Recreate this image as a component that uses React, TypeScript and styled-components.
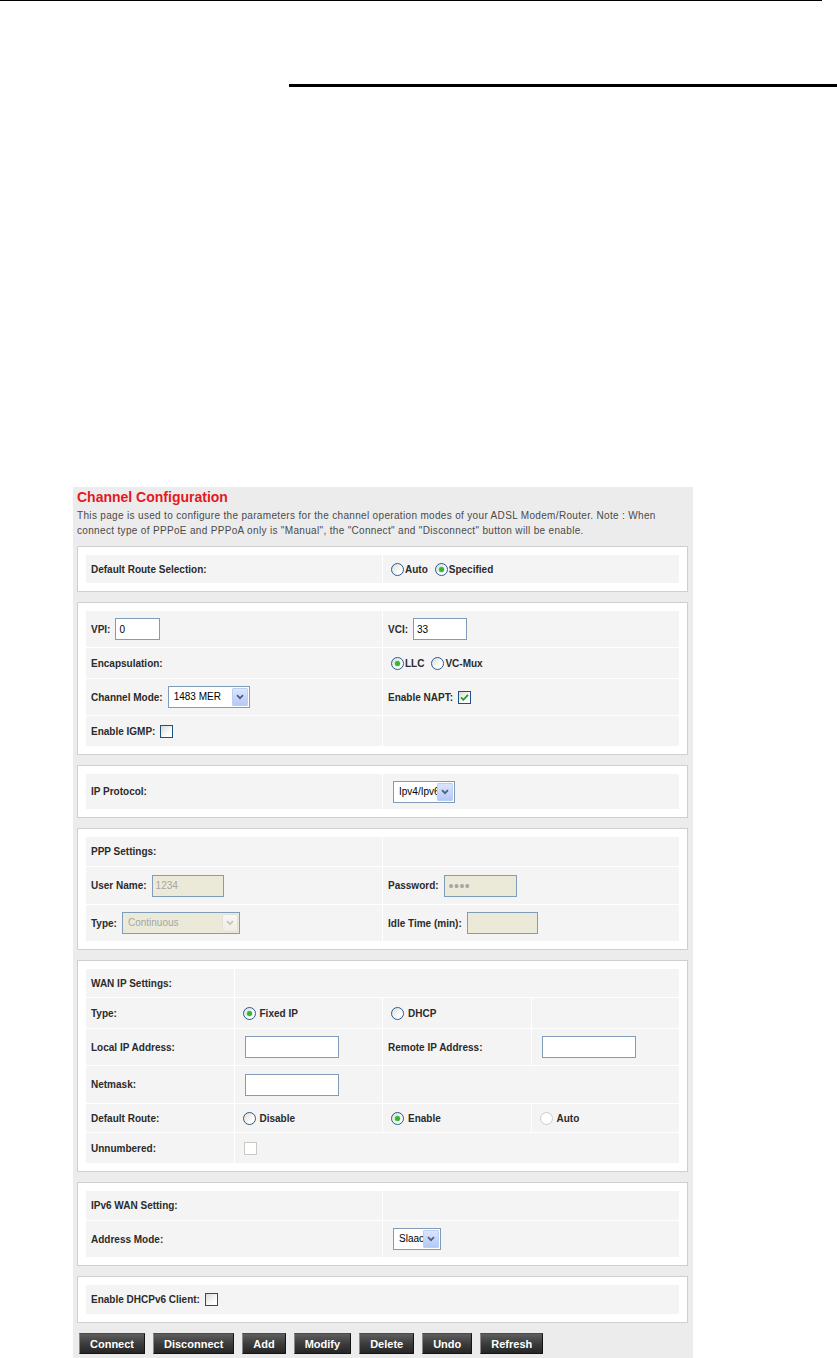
import React from "react";
import styled, { createGlobalStyle } from "styled-components";

const GlobalStyle = createGlobalStyle`
  html, body { margin: 0; padding: 0; background: #ffffff; overflow: hidden; }
  body { font-family: "Liberation Sans", Arial, sans-serif; }
  * { box-sizing: border-box; }
`;

const Page = styled.div`
  width: 837px;
  height: 1358px;
  overflow: hidden;
`;

const TopRule = styled.div`
  width: 822px;
  height: 1px;
  background: #000;
`;

const HeaderRule = styled.div`
  margin: 83px 0 0 289px;
  height: 3px;
  background: #000;
`;

const Panel = styled.div`
  margin: 400px 0 0 73px;
  width: 620px;
  background: #ececec;
  padding: 2px 5px 8px 4px;
`;

const Title = styled.h1`
  margin: 0;
  font-size: 14px;
  line-height: 17px;
  font-weight: bold;
  color: #e4181e;
`;

const Desc = styled.p`
  margin: 2px 0 8px;
  font-size: 10px;
  line-height: 15px;
  letter-spacing: 0.33px;
  color: #4a4a4a;
  white-space: nowrap;
`;

const Sections = styled.div`
  display: flex;
  flex-direction: column;
  gap: 10px;
`;

const Box = styled.section`
  background: #fff;
  border: 1px solid #cfcfcf;
  padding: 7px;
`;

const FormTable = styled.table`
  width: 100%;
  table-layout: fixed;
  border-collapse: separate;
  border-spacing: 1px;
`;

const Col = styled.col<{ $w: string }>`
  width: ${(p) => p.$w};
`;

const Row = styled.tr<{ $h?: number }>`
  & > td {
    height: ${(p) => p.$h ?? 29}px;
  }
`;

const Cell = styled.td`
  background: #f4f4f4;
  padding: 0 5px;
  font-size: 10px;
  line-height: 15px;
  font-weight: bold;
  color: #2b2b2b;
  vertical-align: middle;
  white-space: nowrap;
  overflow: hidden;
`;

const Field = styled.div`
  display: flex;
  align-items: center;
  gap: 5px;
`;

const Inset = styled.div<{ $pad: number }>`
  display: flex;
  align-items: center;
  padding-left: ${(p) => p.$pad}px;
`;

const Options = styled.div`
  display: flex;
  align-items: center;
  height: 15px;
`;

const Option = styled.span<{ $gap: number }>`
  display: flex;
  align-items: center;
  gap: ${(p) => p.$gap}px;
  margin-right: 4px;
`;

const RadioMark = styled.span<{ $checked?: boolean; $disabled?: boolean }>`
  display: flex;
  align-items: center;
  justify-content: center;
  flex: none;
  width: 13px;
  height: 13px;
  margin-left: 3px;
  border-radius: 50%;
  border: 1px solid ${(p) => (p.$disabled ? "#cdcdc6" : "#2c5a8a")};
  background: ${(p) =>
    p.$disabled ? "#ffffff" : "linear-gradient(135deg, #dedcd4 0%, #ffffff 70%)"};
  &::after {
    content: "";
    width: 5px;
    height: 5px;
    border-radius: 50%;
    background: #34b534;
    box-shadow: 0 0 1px 0.5px #a6e2a6;
    display: ${(p) => (p.$checked ? "block" : "none")};
  }
`;

const CheckMark = styled.span<{ $disabled?: boolean }>`
  display: flex;
  align-items: center;
  justify-content: center;
  flex: none;
  width: 13px;
  height: 13px;
  border: 1px solid ${(p) => (p.$disabled ? "#c9c9c2" : "#1c5180")};
  background: ${(p) =>
    p.$disabled ? "#ffffff" : "linear-gradient(135deg, #dcdcd5 0%, #ffffff 75%)"};
`;

const TextInput = styled.input<{ $w: number }>`
  width: ${(p) => p.$w}px;
  height: 22px;
  margin: 0;
  border: 1px solid #7f9db9;
  padding: 0 3px;
  font: 10px "Liberation Sans", Arial, sans-serif;
  color: #000;
  background: #fff;
  outline: none;
  &:disabled {
    background: #ebe9d8;
    color: #a6a6a6;
    -webkit-text-fill-color: #a6a6a6;
  }
`;

const PasswordInput = styled(TextInput)`
  font-size: 14px;
  letter-spacing: 0.5px;
  padding-left: 4px;
`;

const SelectBox = styled.div<{ $w: number; $disabled?: boolean }>`
  display: flex;
  align-items: stretch;
  width: ${(p) => p.$w}px;
  height: 22px;
  padding: 1px;
  border: 1px solid #7f9db9;
  background: ${(p) => (p.$disabled ? "#ebe9d8" : "#ffffff")};
  font-weight: normal;
`;

const SelectValue = styled.span<{ $disabled?: boolean }>`
  flex: 1;
  min-width: 0;
  overflow: hidden;
  white-space: nowrap;
  padding-left: 4px;
  font-size: 10px;
  line-height: 18px;
  color: ${(p) => (p.$disabled ? "#a6a6a6" : "#000")};
`;

const SelectButton = styled.span<{ $disabled?: boolean }>`
  flex: none;
  width: 16px;
  display: flex;
  align-items: center;
  justify-content: center;
  border: 1px solid ${(p) => (p.$disabled ? "#e2e1da" : "#bdcdf6")};
  border-radius: 1px;
  background: ${(p) =>
    p.$disabled
      ? "linear-gradient(#f7f6f2, #eeede7)"
      : "linear-gradient(#dbe5fd, #b5c9f6)"};
`;

const ActionBar = styled.div`
  display: flex;
  gap: 8px;
  margin-top: 10px;
  padding-left: 2px;
`;

const ActionButton = styled.button`
  height: 21px;
  padding: 0 10px;
  margin: 0;
  font: bold 11px "Liberation Sans", Arial, sans-serif;
  color: #fff;
  background: linear-gradient(#5e5e5e 0%, #3a3a3a 55%, #262626 100%);
  border: 1px solid #141414;
  border-left-color: #8a8a8a;
  border-top-color: #4a4a4a;
  cursor: pointer;
`;

type RadioProps = { checked?: boolean; disabled?: boolean; label: string; gap?: number };

const Radio = ({ checked, disabled, label, gap = 1 }: RadioProps) => (
  <Option $gap={gap}>
    <RadioMark $checked={checked} $disabled={disabled} />
    <span>{label}</span>
  </Option>
);

const Checkbox = ({ checked, disabled }: { checked?: boolean; disabled?: boolean }) => (
  <CheckMark $disabled={disabled}>
    {checked && (
      <svg width="9" height="9" viewBox="0 0 9 9">
        <path d="M1 4.4 L3.4 6.8 L8 1.8" fill="none" stroke="#21a121" strokeWidth="1.8" />
      </svg>
    )}
  </CheckMark>
);

const Select = ({ value, width, disabled }: { value: string; width: number; disabled?: boolean }) => (
  <SelectBox $w={width} $disabled={disabled}>
    <SelectValue $disabled={disabled}>{value}</SelectValue>
    <SelectButton $disabled={disabled}>
      <svg width="8" height="6" viewBox="0 0 8 6">
        <path
          d="M1 1.2 L4 4.2 L7 1.2"
          fill="none"
          stroke={disabled ? "#c8c6b8" : "#4d6185"}
          strokeWidth="1.8"
        />
      </svg>
    </SelectButton>
  </SelectBox>
);

const TwoCols = () => (
  <colgroup>
    <Col $w="50%" />
    <Col $w="50%" />
  </colgroup>
);

export default function App() {
  return (
    <Page>
      <GlobalStyle />
      <TopRule />
      <HeaderRule />
      <Panel>
        <Title>Channel Configuration</Title>
        <Desc>
          This page is used to configure the parameters for the channel operation modes of your ADSL Modem/Router. Note : When
          <br />
          connect type of PPPoE and PPPoA only is "Manual", the "Connect" and "Disconnect" button will be enable.
        </Desc>
        <Sections>
          <Box>
            <FormTable>
              <TwoCols />
              <tbody>
                <Row $h={28}>
                  <Cell>Default Route Selection:</Cell>
                  <Cell>
                    <Options>
                      <Radio label="Auto" />
                      <Radio label="Specified" checked />
                    </Options>
                  </Cell>
                </Row>
              </tbody>
            </FormTable>
          </Box>

          <Box>
            <FormTable>
              <TwoCols />
              <tbody>
                <Row $h={36}>
                  <Cell>
                    <Field>
                      VPI: <TextInput $w={45} defaultValue="0" />
                    </Field>
                  </Cell>
                  <Cell>
                    <Field>
                      VCI: <TextInput $w={54} defaultValue="33" />
                    </Field>
                  </Cell>
                </Row>
                <Row $h={30}>
                  <Cell>Encapsulation:</Cell>
                  <Cell>
                    <Options>
                      <Radio label="LLC" checked />
                      <Radio label="VC-Mux" />
                    </Options>
                  </Cell>
                </Row>
                <Row $h={36}>
                  <Cell>
                    <Field>
                      Channel Mode: <Select value="1483 MER" width={82} />
                    </Field>
                  </Cell>
                  <Cell>
                    <Field>
                      Enable NAPT: <Checkbox checked />
                    </Field>
                  </Cell>
                </Row>
                <Row $h={30}>
                  <Cell>
                    <Field>
                      Enable IGMP: <Checkbox />
                    </Field>
                  </Cell>
                  <Cell />
                </Row>
              </tbody>
            </FormTable>
          </Box>

          <Box>
            <FormTable>
              <TwoCols />
              <tbody>
                <Row $h={35}>
                  <Cell>IP Protocol:</Cell>
                  <Cell>
                    <Inset $pad={5}>
                      <Select value="Ipv4/Ipv6" width={62} />
                    </Inset>
                  </Cell>
                </Row>
              </tbody>
            </FormTable>
          </Box>

          <Box>
            <FormTable>
              <TwoCols />
              <tbody>
                <Row>
                  <Cell>PPP Settings:</Cell>
                  <Cell />
                </Row>
                <Row $h={37}>
                  <Cell>
                    <Field>
                      User Name: <TextInput $w={72} defaultValue="1234" disabled />
                    </Field>
                  </Cell>
                  <Cell>
                    <Field>
                      Password: <PasswordInput $w={73} type="password" defaultValue="1234" disabled />
                    </Field>
                  </Cell>
                </Row>
                <Row $h={36}>
                  <Cell>
                    <Field>
                      Type: <Select value="Continuous" width={118} disabled />
                    </Field>
                  </Cell>
                  <Cell>
                    <Field>
                      Idle Time (min): <TextInput $w={71} disabled />
                    </Field>
                  </Cell>
                </Row>
              </tbody>
            </FormTable>
          </Box>

          <Box>
            <FormTable>
              <colgroup>
                <Col $w="25%" />
                <Col $w="25%" />
                <Col $w="25%" />
                <Col $w="25%" />
              </colgroup>
              <tbody>
                <Row $h={28}>
                  <Cell>WAN IP Settings:</Cell>
                  <Cell colSpan={3} />
                </Row>
                <Row $h={30}>
                  <Cell>Type:</Cell>
                  <Cell>
                    <Options>
                      <Radio label="Fixed IP" checked gap={4} />
                    </Options>
                  </Cell>
                  <Cell>
                    <Options>
                      <Radio label="DHCP" gap={4} />
                    </Options>
                  </Cell>
                  <Cell />
                </Row>
                <Row $h={36}>
                  <Cell>Local IP Address:</Cell>
                  <Cell>
                    <Inset $pad={5}>
                      <TextInput $w={94} />
                    </Inset>
                  </Cell>
                  <Cell>Remote IP Address:</Cell>
                  <Cell>
                    <Inset $pad={5}>
                      <TextInput $w={94} />
                    </Inset>
                  </Cell>
                </Row>
                <Row $h={37}>
                  <Cell>Netmask:</Cell>
                  <Cell>
                    <Inset $pad={5}>
                      <TextInput $w={94} />
                    </Inset>
                  </Cell>
                  <Cell colSpan={2} />
                </Row>
                <Row $h={28}>
                  <Cell>Default Route:</Cell>
                  <Cell>
                    <Options>
                      <Radio label="Disable" gap={4} />
                    </Options>
                  </Cell>
                  <Cell>
                    <Options>
                      <Radio label="Enable" checked gap={4} />
                    </Options>
                  </Cell>
                  <Cell>
                    <Options>
                      <Radio label="Auto" disabled gap={4} />
                    </Options>
                  </Cell>
                </Row>
                <Row $h={30}>
                  <Cell>Unnumbered:</Cell>
                  <Cell colSpan={3}>
                    <Inset $pad={4}>
                      <Checkbox disabled />
                    </Inset>
                  </Cell>
                </Row>
              </tbody>
            </FormTable>
          </Box>

          <Box>
            <FormTable>
              <TwoCols />
              <tbody>
                <Row>
                  <Cell>IPv6 WAN Setting:</Cell>
                  <Cell />
                </Row>
                <Row $h={36}>
                  <Cell>Address Mode:</Cell>
                  <Cell>
                    <Inset $pad={5}>
                      <Select value="Slaac" width={48} />
                    </Inset>
                  </Cell>
                </Row>
              </tbody>
            </FormTable>
          </Box>

          <Box>
            <FormTable>
              <tbody>
                <Row>
                  <Cell>
                    <Field>
                      Enable DHCPv6 Client: <Checkbox />
                    </Field>
                  </Cell>
                </Row>
              </tbody>
            </FormTable>
          </Box>
        </Sections>

        <ActionBar>
          {["Connect", "Disconnect", "Add", "Modify", "Delete", "Undo", "Refresh"].map((t) => (
            <ActionButton key={t} type="button">
              {t}
            </ActionButton>
          ))}
        </ActionBar>
      </Panel>
    </Page>
  );
}
